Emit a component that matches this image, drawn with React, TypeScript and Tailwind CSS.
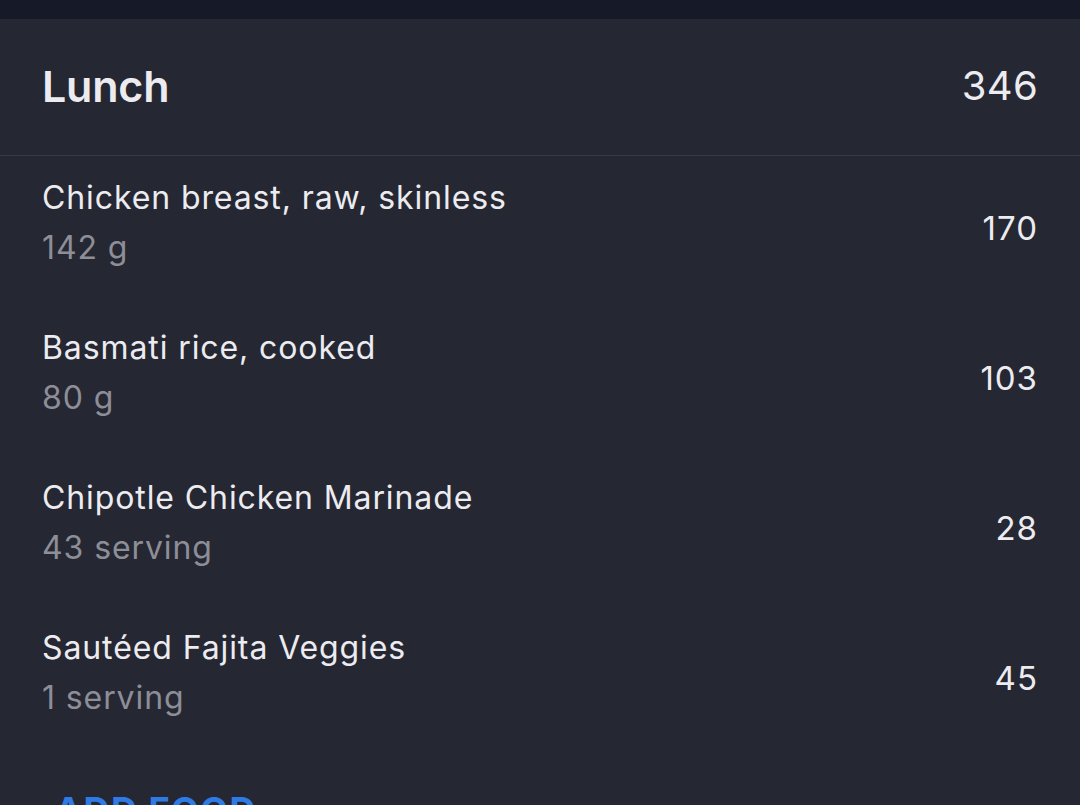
const items = [
  { name: "Chicken breast, raw, skinless", amount: "142 g", kcal: 170 },
  { name: "Basmati rice, cooked", amount: "80 g", kcal: 103 },
  { name: "Chipotle Chicken Marinade", amount: "43 serving", kcal: 28 },
  { name: "Sautéed Fajita Veggies", amount: "1 serving", kcal: 45 },
];

export default function App() {
  return (
    <div
      className="h-[805px] w-[1080px] overflow-hidden bg-[#161927]"
      style={{ fontFamily: "Inter, 'Noto Sans', sans-serif" }}
    >
      <div className="mt-[19px] h-[786px] bg-[#252733]">
        {/* header */}
        <div className="flex h-[137px] items-center justify-between border-b border-[#383a46] px-[42px] pb-[2px]">
          <h2 className="text-[43px] font-semibold leading-none tracking-[-0.2px] text-[#ececf0]">
            Lunch
          </h2>
          <span className="text-[40px] leading-none tracking-[0.3px] text-[#ececf0]">
            346
          </span>
        </div>

        {/* food rows */}
        <ul>
          {items.map((item) => (
            <li
              key={item.name}
              className="flex h-[150px] items-center justify-between px-[42px] pb-[6px]"
            >
              <div className="pb-[10px]">
                <div className="text-[32px] leading-[50px] tracking-[0.9px] text-[#ececf0]">
                  {item.name}
                </div>
                <div className="text-[32px] leading-[50px] tracking-[0.9px] text-[#8d8e97]">
                  {item.amount}
                </div>
              </div>
              <span className="text-[33px] leading-none tracking-[1px] text-[#ececf0]">
                {item.kcal}
              </span>
            </li>
          ))}
        </ul>

        <button className="ml-[55px] mt-[36px] text-[36px] font-bold leading-none tracking-[1.5px] text-[#2f7be6]">
          ADD FOOD
        </button>
      </div>
    </div>
  );
}
